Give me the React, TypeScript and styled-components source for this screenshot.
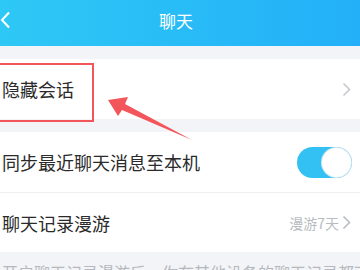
import * as React from 'react'
import styled, { createGlobalStyle } from 'styled-components'

const Global = createGlobalStyle`
  html, body {
    margin: 0;
    padding: 0;
    background: #f3f4f8;
    font-family: "Noto Sans CJK SC", "Noto Sans", sans-serif;
  }
`

const Page = styled.div`
  position: relative;
  width: 360px;
  height: 270px;
  overflow: hidden;
  background: #f3f4f8;
`

const Header = styled.div`
  height: 46px;
  background: linear-gradient(90deg, #2ec8f5, #23b0f8);
  display: flex;
  align-items: center;
  justify-content: center;
  position: relative;
`

const Title = styled.div`
  color: #fff;
  font-size: 17px;
  margin-top: -6px;
  margin-left: -8px;
`

const Back = styled.svg`
  position: absolute;
  left: 0;
  top: 11px;
`

const Section = styled.div<{ $gap: number }>`
  margin-top: ${(p) => p.$gap}px;
  background: #fff;
`

const Row = styled.div<{ $h: number; $line?: boolean }>`
  height: ${(p) => p.$h}px;
  display: flex;
  align-items: center;
  justify-content: space-between;
  padding: 0 9px 0 2px;
  border-bottom: ${(p) => (p.$line ? '1px solid #eef0f3' : 'none')};
`

const Label = styled.div`
  font-size: 18px;
  color: #2a2a2a;
`

const Right = styled.div`
  display: flex;
  align-items: center;
  gap: 3px;
  color: #b8bbc0;
  font-size: 14px;
`

const Toggle = styled.div`
  width: 55px;
  height: 31px;
  border-radius: 16px;
  background: #33c1f3;
  display: flex;
  align-items: center;
  justify-content: flex-end;
  padding: 0 1px;
  box-sizing: border-box;
  margin-right: -1px;
`

const Knob = styled.div`
  width: 29px;
  height: 29px;
  border-radius: 50%;
  background: #fff;
  box-shadow: 0 0 0 1px #cfe7ef;
`

const Note = styled.div`
  padding: 10px 0 0 2px;
  font-size: 16px;
  color: #b5b8bd;
  white-space: nowrap;
  line-height: 20px;
`

const Highlight = styled.div`
  position: absolute;
  left: -2px;
  top: 63px;
  width: 92px;
  height: 55px;
  border: 2px solid #f2555a;
`

const Arrow = styled.svg`
  position: absolute;
  left: 0;
  top: 0;
`

const Chevron = ({ color = '#c6c9ce' }: { color?: string }) => (
  <svg width="9" height="15" viewBox="0 0 9 15">
    <path d="M1.5 1.5 L7.5 7.5 L1.5 13.5" fill="none" stroke={color} strokeWidth="1.6" />
  </svg>
)

export default function App() {
  return (
    <Page>
      <Global />
      <Header>
        <Back width="12" height="18" viewBox="0 0 12 18">
          <path d="M9 1.5 L2 9 L9 16.5" fill="none" stroke="#fff" strokeWidth="2" />
        </Back>
        <Title>聊天</Title>
      </Header>
      <Section $gap={13}>
        <Row $h={60}>
          <Label>隐藏会话</Label>
          <Chevron />
        </Row>
      </Section>
      <Section $gap={13}>
        <Row $h={60} $line>
          <Label>同步最近聊天消息至本机</Label>
          <Toggle>
            <Knob />
          </Toggle>
        </Row>
        <Row $h={59}>
          <Label>聊天记录漫游</Label>
          <Right>
            漫游7天
            <Chevron color="#b8bbc0" />
          </Right>
        </Row>
      </Section>
      <Note>开启聊天记录漫游后，你在其他设备的聊天记录都可</Note>
      <Highlight />
      <Arrow width="360" height="270" viewBox="0 0 360 270">
        <path d="M108 100 L128 97 L125 104 L192 140 L122 110 L118 116 Z" fill="#f2555a" />
      </Arrow>
    </Page>
  )
}
